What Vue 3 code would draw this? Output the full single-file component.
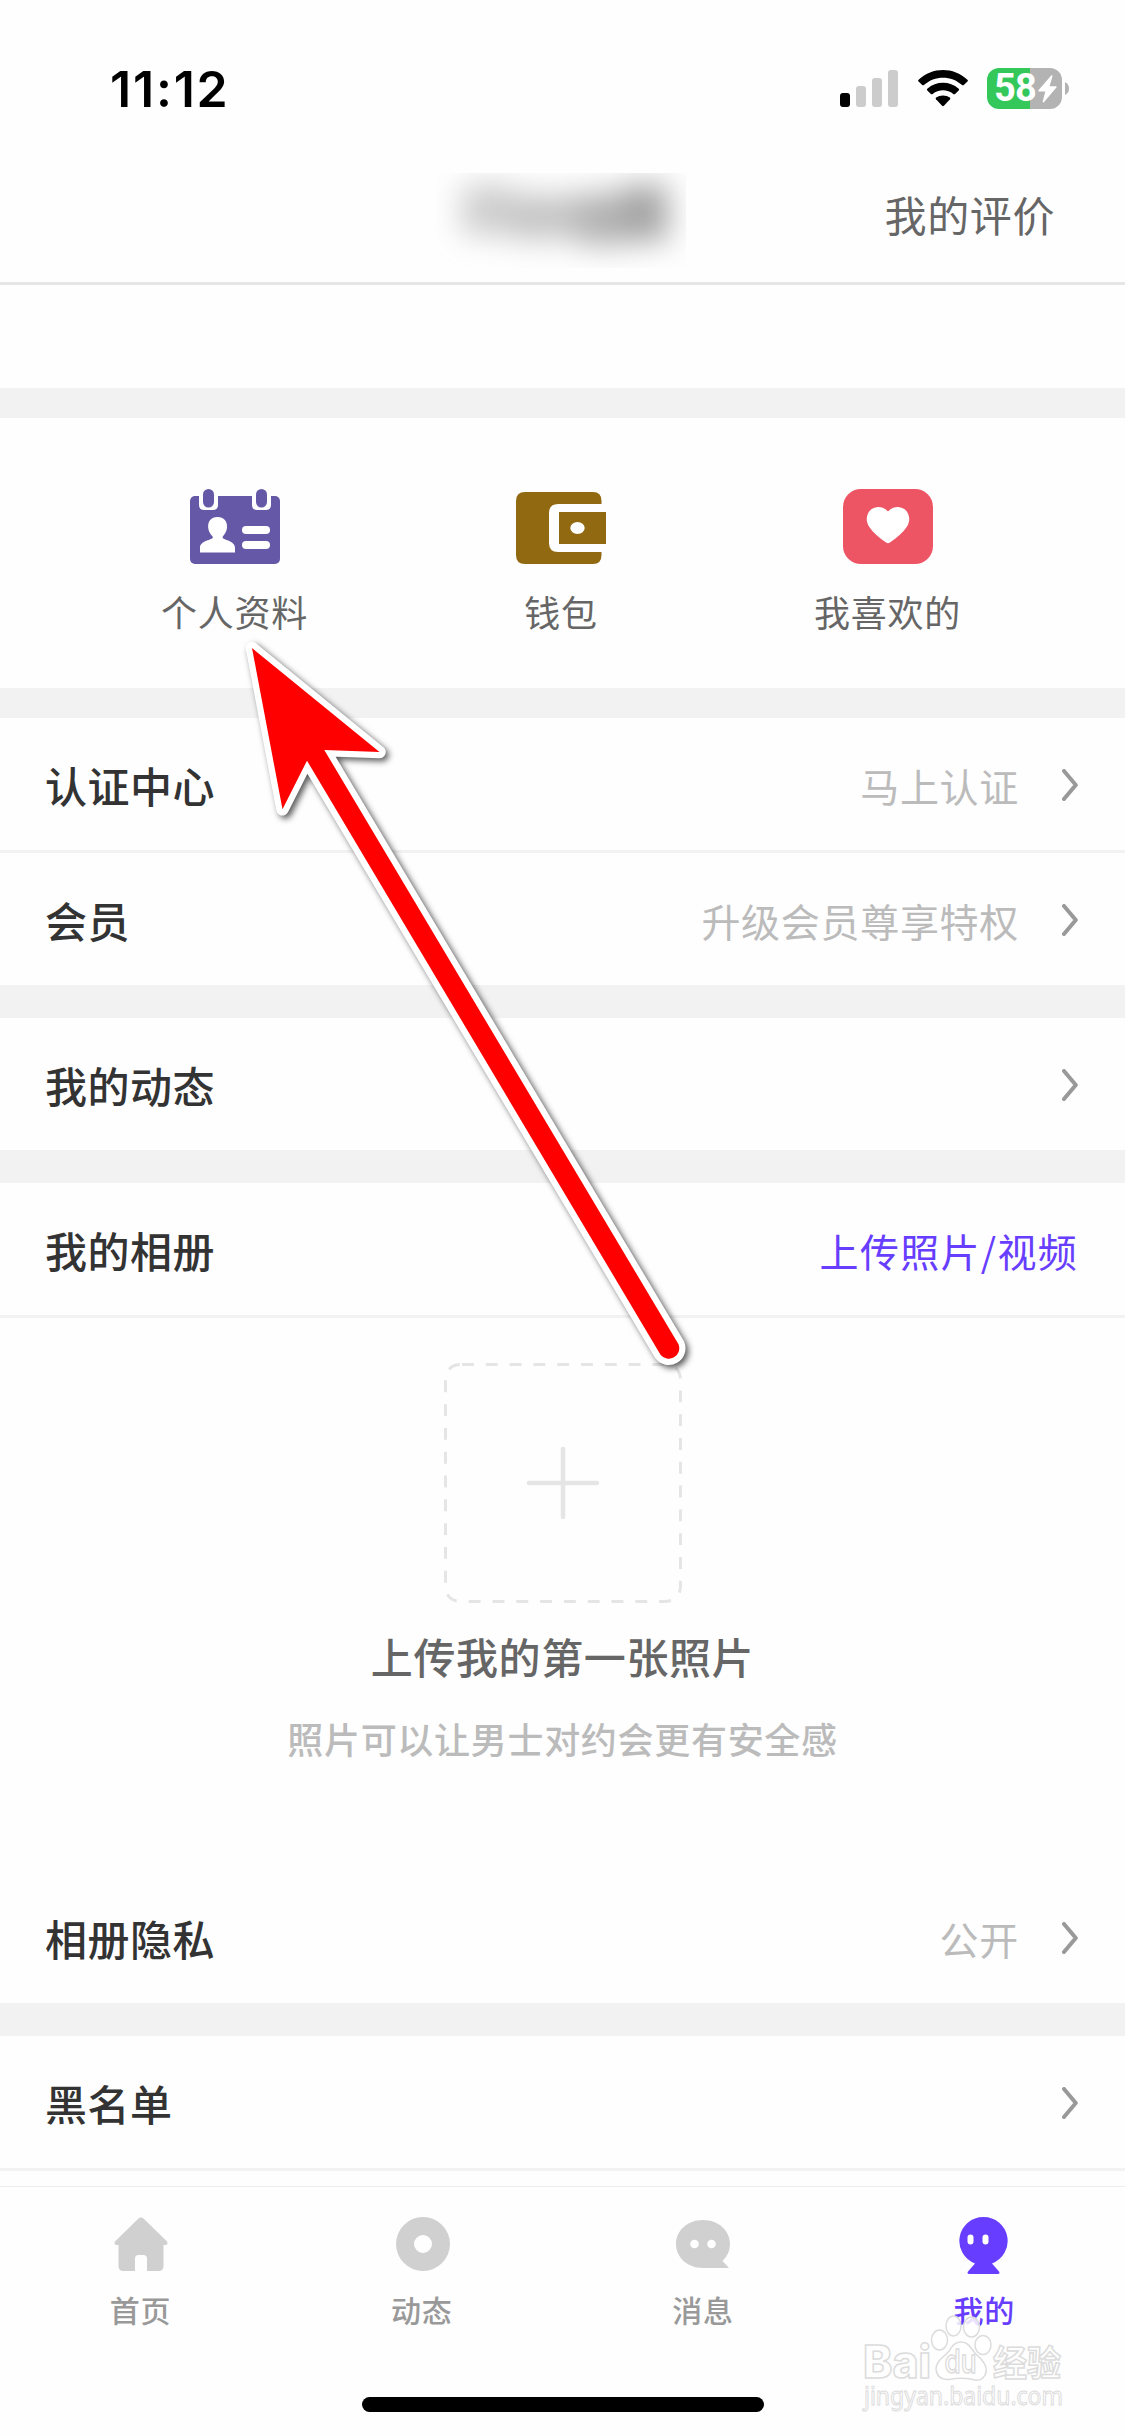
<script setup>
const shortcuts = [
  { key: 'profile', label: '个人资料' },
  { key: 'wallet', label: '钱包' },
  { key: 'liked', label: '我喜欢的' },
]

const groups = [
  [
    { label: '认证中心', value: '马上认证', arrow: true },
    { label: '会员', value: '升级会员尊享特权', arrow: true },
  ],
  [{ label: '我的动态', arrow: true }],
  [{ label: '我的相册', value: '上传照片/视频', accent: true }],
]

const lowerGroups = [
  [{ label: '相册隐私', value: '公开', arrow: true }],
  [{ label: '黑名单', arrow: true }],
]

const tabs = [
  { key: 'home', label: '首页' },
  { key: 'feed', label: '动态' },
  { key: 'chat', label: '消息' },
  { key: 'mine', label: '我的', active: true },
]
</script>

<template>
  <div class="screen">
    <header class="status">
      <span class="time">11:12</span>
      <div class="indicators">
        <svg class="signal" viewBox="0 0 58 37" width="58" height="37">
          <rect x="0" y="23" width="10" height="14" rx="3" fill="#000" />
          <rect x="16" y="16" width="10" height="21" rx="3" fill="#ccc" />
          <rect x="32" y="8" width="10" height="29" rx="3" fill="#ccc" />
          <rect x="48" y="0" width="10" height="37" rx="3" fill="#ccc" />
        </svg>
        <svg class="wifi" viewBox="0 0 50 37" width="50" height="37">
          <path d="M0.6 11.6Q-0.4 10.600 0.6 9.700C14.500 -3.200 35.500 -3.200 49.400 9.700Q50.400 10.600 49.400 11.600L45.800 15Q45 15.700 44.100 15C33.300 5.200 16.700 5.200 5.900 15Q5 15.700 4.200 15Z" />
          <path d="M9.300 20.400Q8.400 19.500 9.300 18.700C18.300 10.800 31.700 10.800 40.700 18.700Q41.600 19.500 40.700 20.400L37.100 23.900Q36.200 24.700 35.300 23.900C29.400 19 20.600 19 14.700 23.900Q13.800 24.700 12.900 23.900Z" />
          <path d="M18 29.200Q17.200 28.300 18.100 27.600C22.100 24.900 27.900 24.900 31.900 27.600Q32.800 28.300 32 29.200L25.900 35.800Q25 36.700 24.100 35.800Z" />
        </svg>
        <div class="battery">
          <div class="cell">
            <span class="level">58</span>
            <svg class="bolt" viewBox="0 0 19 28" width="19" height="28">
              <path d="M13.400 .3 .4 15.200q-.5 1 .6 1.200H7.300L4.700 26.500q-.1 1.500 1.200 .8L18.400 12.600q.7-1.100-.5-1.300H11.600L14.500 1.200q0-1.300-1.100-.9Z" fill="#fff" />
            </svg>
          </div>
          <svg viewBox="0 0 4 13" width="4" height="13"><path d="M0 0Q4 2 4 6.500T0 13Z" fill="#b3b3b3" /></svg>
        </div>
      </div>
    </header>

    <nav class="navbar">
      <div class="spacer"></div>
      <div class="title">
        <svg viewBox="0 0 250 95" width="250" height="95">
          <defs>
            <filter id="soft" x="-30%" y="-80%" width="160%" height="260%">
              <feGaussianBlur stdDeviation="15" />
            </filter>
          </defs>
          <g filter="url(#soft)">
            <rect x="26" y="12" width="52" height="50" fill="#cecece" />
            <rect x="74" y="22" width="72" height="44" fill="#c4c4c4" />
            <rect x="142" y="20" width="48" height="52" fill="#b2b2b2" />
            <rect x="186" y="12" width="46" height="56" fill="#a4a4a4" />
          </g>
        </svg>
      </div>
      <a class="reviews">我的评价</a>
    </nav>

    <div class="blank"></div>
    <div class="band thin"></div>

    <section class="shortcuts">
      <div v-for="s in shortcuts" :key="s.key" class="shortcut">
        <svg v-if="s.key === 'profile'" viewBox="0 0 90 75" width="90" height="75">
          <rect y="7" width="90" height="68" rx="5" fill="#6558a6" />
          <path d="M9 7H28V16Q28 21 23 21H14Q9 21 9 16ZM62 7H81V16Q81 21 76 21H67Q62 21 62 16Z" fill="#fefefe" />
          <rect x="13" y="0" width="11" height="18.500" rx="5.500" fill="#6558a6" />
          <rect x="66" y="0" width="11" height="18.500" rx="5.500" fill="#6558a6" />
          <path d="M27.500 28C34 28 37.500 32 37 39C36.600 43 34 46 32.500 48C32.500 51.500 45 51 45 59V63.500H10V59C10 51 22.700 51.500 23 48C21 46 18.600 43 18.200 39C17.700 32 21 28 27.500 28Z" fill="#fff" />
          <rect x="52" y="37" width="28" height="8" rx="4" fill="#fff" />
          <rect x="52" y="52" width="28" height="8" rx="4" fill="#fff" />
        </svg>
        <svg v-else-if="s.key === 'wallet'" viewBox="0 0 90 75" width="90" height="75">
          <path d="M9 3H77Q85.500 3 85.500 12V15H42Q33 15 33 24V54Q33 63 42 63H85.500V66Q85.500 75 77 75H9Q0 75 0 66V12Q0 3 9 3Z" fill="#916910" />
          <path fill-rule="evenodd" d="M43 23H90V55H43ZM61.500 33A7.200 6 0 0 0 61.500 45A7.200 6 0 0 0 61.500 33Z" fill="#916910" />
        </svg>
        <svg v-else viewBox="0 0 90 75" width="90" height="75">
          <rect width="90" height="75" rx="18" fill="#ee5564" />
          <path d="M45 22.500C40.500 17 33 16.500 28 20.500C23 25 22.500 32 26 37.500C30 43.500 36 49 43.500 53.800Q45 54.700 46.500 53.800C54 49 60 43.500 64 37.500C67.500 32 67 25 62 20.500C57 16.500 49.500 17 45 22.500Z" fill="#fff" />
        </svg>
        <span>{{ s.label }}</span>
      </div>
    </section>
    <div class="band thin"></div>

    <template v-for="(group, gi) in groups" :key="gi">
      <div v-if="gi" class="band"></div>
      <template v-for="(row, ri) in group" :key="row.label">
        <div v-if="ri" class="divider"></div>
        <div class="row">
          <span class="label">{{ row.label }}</span>
          <span v-if="row.value" class="value" :class="{ accent: row.accent }">{{ row.value }}</span>
          <svg v-if="row.arrow" class="chevron" viewBox="0 0 16 32" width="16" height="32">
            <path d="M2 2 13.800 16 2 30" />
          </svg>
        </div>
      </template>
    </template>
    <div class="divider"></div>

    <section class="album">
      <svg class="upload" viewBox="0 0 238 240" width="238" height="240">
        <path d="M18 1.500H220Q236.500 1.500 236.500 18V222Q236.500 238.500 220 238.500H18Q1.500 238.500 1.500 222V18Q1.500 1.500 18 1.500Z" stroke-width="3" stroke-dasharray="11.900 11.900" />
        <path d="M119 86V154M85 120H153" stroke-width="4.500" stroke-linecap="round" />
      </svg>
      <h2>上传我的第一张照片</h2>
      <p>照片可以让男士对约会更有安全感</p>
    </section>

    <template v-for="(group, gi) in lowerGroups" :key="gi">
      <div v-if="gi" class="band"></div>
      <div v-for="row in group" :key="row.label" class="row">
        <span class="label">{{ row.label }}</span>
        <span v-if="row.value" class="value">{{ row.value }}</span>
        <svg class="chevron" viewBox="0 0 16 32" width="16" height="32">
          <path d="M2 2 13.800 16 2 30" />
        </svg>
      </div>
    </template>
    <div class="divider"></div>

    <footer class="tabbar">
      <div v-for="t in tabs" :key="t.key" class="tab" :class="{ active: t.active }">
        <svg viewBox="0 0 58 58" width="58" height="58">
          <g v-if="t.key === 'home'">
            <path d="M26 2Q29 -0.800 32 2L55 24.500Q56.500 27.500 53.500 28H51.500V49Q51.500 54 46.500 54H35V41.500Q35 38 31.500 38H26.500Q23 38 23 41.500V54H11.500Q6.500 54 6.500 49V28H4.500Q1.500 27.500 3 24.500Z" />
          </g>
          <path v-else-if="t.key === 'feed'" fill-rule="evenodd" d="M30 0A27 27 0 0 1 30 54A27 27 0 0 1 30 0ZM30 18A9 9 0 0 0 30 36A9 9 0 0 0 30 18Z" />
          <g v-else-if="t.key === 'chat'">
            <path d="M29 3C45 3 56 14 56 27Q56 37 48.500 44L55 51H29C13 51 2 40 2 27S13 3 29 3Z" />
            <circle cx="20.500" cy="27" r="4.300" fill="#fff" />
            <circle cx="37.500" cy="27" r="4.300" fill="#fff" />
          </g>
          <g v-else>
            <path d="M28.500 0A24 24 0 0 1 37 46.500L44 54.500Q45.500 57 42.500 57H14.500Q11.500 57 13 54.500L20 46.500A24 24 0 0 1 28.500 0Z" />
            <rect x="12.500" y="17.500" width="6" height="10" rx="3" fill="#fff" />
            <rect x="27.500" y="17.500" width="6" height="10" rx="3" fill="#fff" />
          </g>
        </svg>
        <span>{{ t.label }}</span>
      </div>
    </footer>
    <div class="home-bar"></div>

    <svg class="pointer" viewBox="0 0 1125 2436" width="1125" height="2436">
      <path d="M252 648 379.500 752 324.300 750 678.500 1344.300A10.500 10.500 0 0 1 660.500 1354.700L307 760.700 282.500 809.300Z" />
      <path class="core" d="M252 648 379.500 752 324.300 750 678.500 1344.300A10.500 10.500 0 0 1 660.500 1354.700L307 760.700 282.500 809.300Z" />
    </svg>

    <svg class="watermark" viewBox="0 0 210 105" width="210" height="105">
      <g class="outline">
        <text x="3" y="67" class="wm-bai" textLength="68" lengthAdjust="spacingAndGlyphs">Bai</text>
        <ellipse cx="79.500" cy="29" rx="8" ry="10" />
        <ellipse cx="93.500" cy="15" rx="7.500" ry="10" />
        <ellipse cx="111.500" cy="16" rx="8" ry="10" />
        <ellipse cx="123" cy="34" rx="8" ry="9.500" />
        <path d="M101 31Q107 31 111 37T121 48Q129 57 125 64T113 68.500Q101 66 89 68.500Q77 69 76 58Q76 52 83 46T91 37Q95 31 101 31Z" />
        <text x="84.500" y="62" class="wm-du" textLength="32" lengthAdjust="spacingAndGlyphs">du</text>
        <text x="133" y="65" class="wm-cn" textLength="68" lengthAdjust="spacingAndGlyphs">经验</text>
        <text x="4" y="94" class="wm-url" textLength="199" lengthAdjust="spacingAndGlyphs">jingyan.baidu.com</text>
      </g>
    </svg>
  </div>
</template>

<style>
body {
  margin: 0;
  background: #fefefe;
}
</style>

<style scoped>
.screen {
  position: relative;
  display: flex;
  flex-direction: column;
  width: 1125px;
  height: 2436px;
  overflow: hidden;
  background: #fefefe;
  font-family: 'Noto Sans CJK SC', sans-serif;
  color: #333;
}
.screen > * {
  flex-shrink: 0;
}
.status {
  display: flex;
  justify-content: space-between;
  box-sizing: border-box;
  height: 141px;
  padding: 68px 56px 0 110px;
}
.time {
  margin-top: -9px;
  height: 60px;
  font: 600 50px/60px Inter, sans-serif;
  letter-spacing: 1.8px;
  color: #000;
}
.indicators {
  display: flex;
  align-items: center;
  height: 41px;
}
.wifi {
  margin: 0 19px 0 20px;
}
.battery {
  display: flex;
  align-items: center;
  gap: 3px;
}
.cell {
  display: flex;
  align-items: center;
  box-sizing: border-box;
  width: 75px;
  height: 41px;
  padding-left: 7px;
  gap: 2px;
  border-radius: 12px;
  background: linear-gradient(90deg, #34c759 43px, #b3b3b3 43px);
}
.level {
  width: 42px;
  font: 700 38px/41px Roboto, sans-serif;
  letter-spacing: -0.8px;
  color: #fff;
}
.navbar {
  display: grid;
  grid-template-columns: 436px 250px 1fr;
  align-items: start;
  height: 141px;
  border-bottom: 3px solid #e6e6e6;
}
.title {
  margin-top: 32px;
  height: 95px;
  overflow: hidden;
}
.title svg {
  display: block;
}
.reviews {
  justify-self: end;
  margin: 43px 70px 0 0;
  font-size: 42px;
  line-height: 60px;
  letter-spacing: 0.6px;
  color: #666;
}
.blank {
  height: 103px;
}
.band {
  height: 33px;
  background: #f2f2f2;
}
.band.thin {
  height: 30px;
}
.divider {
  height: 3px;
  background: #f2f2f2;
}
.shortcuts {
  display: grid;
  grid-template-columns: repeat(3, 326.500px);
  justify-content: center;
  box-sizing: border-box;
  height: 270px;
  padding: 71px 3px 0 0;
}
.shortcut {
  display: flex;
  flex-direction: column;
  align-items: center;
  gap: 21px;
}
.shortcut span {
  font-size: 36px;
  line-height: 52px;
  letter-spacing: 0.7px;
  color: #666;
}
.row {
  display: flex;
  align-items: center;
  box-sizing: border-box;
  height: 132px;
  padding: 2px 47px 0 45px;
}
.label {
  flex: 1;
  font-size: 42px;
  font-weight: 500;
  line-height: 60px;
  letter-spacing: 0.5px;
  color: #333;
}
.value {
  font-size: 39px;
  line-height: 56px;
  letter-spacing: 0.7px;
  color: #bbb;
}
.value.accent {
  letter-spacing: 1.3px;
  color: #673dff;
}
.chevron {
  margin-left: 43px;
}
.chevron path {
  fill: none;
  stroke: #999;
  stroke-width: 4;
  stroke-linecap: round;
  stroke-linejoin: round;
}
.album {
  display: flex;
  flex-direction: column;
  align-items: center;
  box-sizing: border-box;
  height: 553px;
  padding-top: 45px;
}
.upload {
  fill: none;
  stroke: #e5e5e5;
}
.album h2 {
  margin: 23px 0 0;
  font-size: 42px;
  font-weight: 500;
  line-height: 60px;
  letter-spacing: 0.6px;
  color: #666;
}
.album p {
  margin: 26px 0 0;
  font-size: 36px;
  font-weight: 500;
  line-height: 52px;
  letter-spacing: 0.7px;
  color: #bbb;
}
.tabbar {
  display: grid;
  grid-template-columns: repeat(4, 1fr);
  margin-top: 15px;
  height: 210px;
  border-top: 1px solid #eee;
}
.tab {
  display: flex;
  flex-direction: column;
  align-items: center;
  gap: 12px;
  padding-top: 30px;
  color: #999;
}
.tab svg {
  fill: #d0d0d0;
}
.tab span {
  font-size: 30px;
  font-weight: 500;
  line-height: 44px;
  letter-spacing: 0.8px;
}
.tab.active {
  color: #673dff;
}
.tab.active svg {
  fill: #673dff;
}
.home-bar {
  align-self: center;
  width: 402px;
  height: 15px;
  border-radius: 8px;
  background: #000;
}
.pointer {
  position: absolute;
  inset: 0;
  pointer-events: none;
}
.pointer path {
  fill: #fff;
  stroke: #fff;
  stroke-width: 12.500px;
  stroke-linejoin: round;
  filter: drop-shadow(3px 3px 3px rgba(0, 0, 0, 0.65));
}
.pointer .core {
  fill: #f00;
  stroke: none;
  filter: none;
}
.watermark {
  position: absolute;
  left: 860px;
  top: 2311px;
  overflow: visible;
}
.outline {
  fill: rgba(255, 255, 255, 0.85);
  stroke: #dcdcdc;
  stroke-width: 1.500px;
}
.wm-bai {
  font: 800 45px Inter, sans-serif;
}
.wm-du {
  font: 500 33px Inter, sans-serif;
}
.wm-cn {
  font: 700 35px 'Noto Sans CJK SC', sans-serif;
}
.wm-url {
  font: 400 25px 'Noto Sans', sans-serif;
  stroke-width: 1px;
}
</style>
